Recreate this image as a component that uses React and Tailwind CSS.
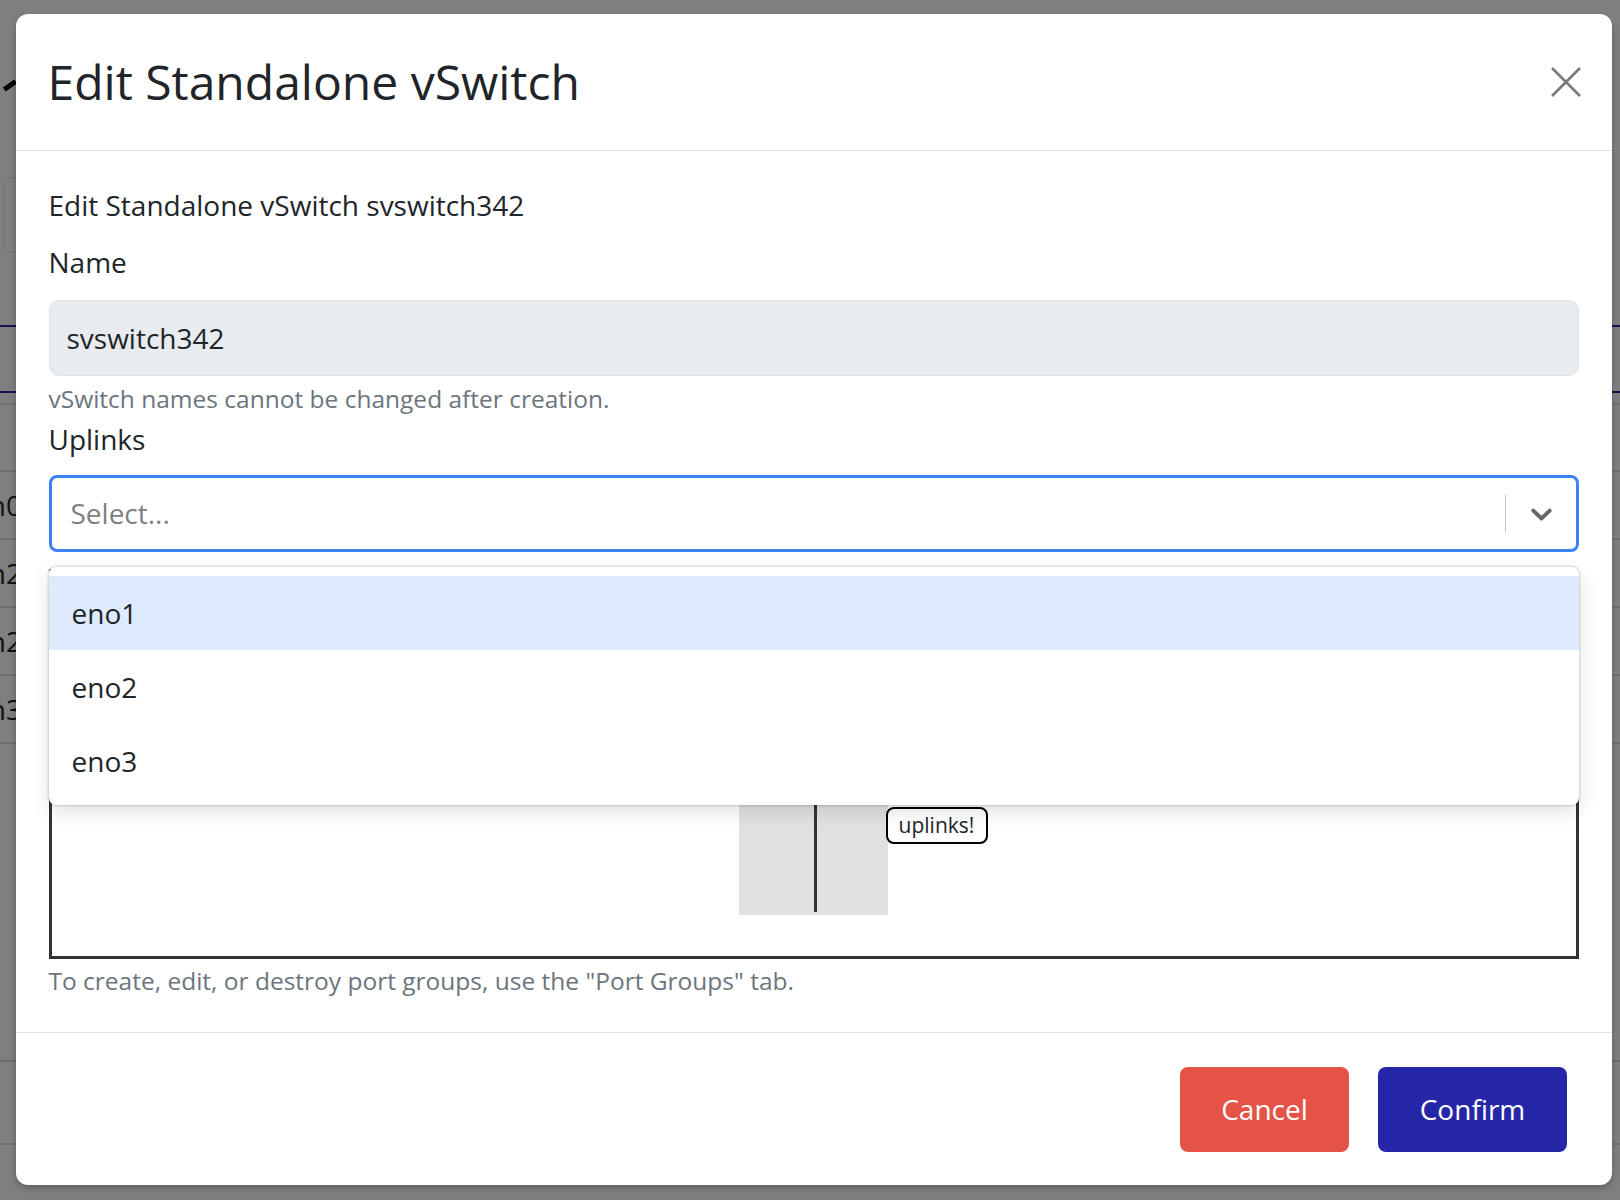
const bgRows = ["vlan0", "vlan2", "vlan2", "vlan3"];
const uplinks = ["eno1", "eno2", "eno3"];

function Chevron() {
  return (
    <svg viewBox="0 0 20 20" className="w-[35px] h-[35px] fill-[#666666]" aria-hidden="true">
      <path d="M4.516 7.548c0.436-0.446 1.043-0.481 1.576 0l3.908 3.747 3.908-3.747c0.533-0.481 1.141-0.446 1.574 0 0.436 0.445 0.408 1.197 0 1.615-0.406 0.418-4.695 4.502-4.695 4.502-0.217 0.223-0.502 0.335-0.787 0.335s-0.57-0.112-0.789-0.335c0 0-4.287-4.084-4.695-4.502s-0.436-1.17 0-1.615z" />
    </svg>
  );
}

function CloseIcon() {
  return (
    <svg viewBox="0 0 30 30" className="w-[30px] h-[30px]" aria-hidden="true">
      <path d="M1 1L29 29M29 1L1 29" stroke="#7a7a7a" strokeWidth="2.6" fill="none" />
    </svg>
  );
}

// page behind the modal, mostly hidden by it
function BackgroundPage() {
  return (
    <div className="flex flex-col w-full h-full bg-white text-[#212529]">
      <div className="h-[80px]" />
      <div className="h-[10px] flex items-center">
        <div className="ml-[3px] w-[14px] h-[5px] bg-black -rotate-[35deg]" />
      </div>
      <div className="h-[87px]" />
      <div className="h-[76px] ml-[3px] w-[400px] rounded-[8px] border border-[#dee2e6] bg-[#fdfdfd]" />
      <div className="h-[72px]" />
      <div className="h-[68px] border-y-2 border-[#2626a8]" />
      <div className="h-[12px] border-b-2 border-[#dee2e6]" />
      <div className="h-[67px] border-b-2 border-[#dee2e6]" />
      {bgRows.map((name, i) => (
        <div key={i} className="h-[68px] border-b-2 border-[#dee2e6] flex items-center">
          <div className="w-[22px] overflow-hidden flex justify-end">
            <span className="text-[28px] whitespace-nowrap">{name}</span>
          </div>
        </div>
      ))}
      <div className="h-[318px] border-b-2 border-[#d5d8dc]" />
      <div className="h-[83px] border-b-2 border-[#dee2e6]" />
      <div className="flex pl-[227px] pt-[6px] text-[28px] font-bold leading-[40px] text-black">
        <span className="w-[579px]">End Time</span>
        <span className="w-[692px]">Node</span>
        <span>Task</span>
      </div>
    </div>
  );
}

function UplinkSelect() {
  return (
    <div className="relative mt-[15px]">
      <div className="h-[77px] rounded-[8px] border-[3px] border-[#3d82f4] bg-white flex items-center">
        <div className="flex-1 pl-[19px] text-[28px] text-[#808080]">Select...</div>
        <div className="w-[1.5px] h-[39px] bg-[#cccccc]" />
        <div className="w-[70px] flex items-center justify-center">
          <Chevron />
        </div>
      </div>
      <div className="absolute left-0 right-0 top-[92px] z-10 rounded-[7px] bg-white pt-[9px] pb-[7px] shadow-[0_0_0_1.5px_rgba(0,0,0,0.1),0_7px_19px_rgba(0,0,0,0.12)]">
        {uplinks.map((u, i) => (
          <div
            key={u}
            className={`h-[74px] flex items-center px-[23px] text-[28px] text-[#212529] ${i === 0 ? "bg-[#deebff]" : ""}`}
          >
            {u}
          </div>
        ))}
      </div>
    </div>
  );
}

function SwitchDiagram() {
  return (
    <div className="relative mt-[11px] h-[352px] border-[3.5px] border-[#333333] bg-white">
      <div className="absolute left-[687px] top-[56px] w-[149px] h-[249px] bg-[#e1e1e1]" />
      <div className="absolute left-[762px] top-[56px] w-[3.5px] h-[246px] bg-[#333333]" />
      <div className="absolute left-[834px] top-[197px] w-[102px] h-[37px] rounded-[8px] border-2 border-black bg-white flex items-center justify-center text-[21px] text-[#212529]">
        uplinks!
      </div>
    </div>
  );
}

export default function App() {
  return (
    <div className="relative w-[1620px] h-[1200px] overflow-hidden font-['Open_Sans',sans-serif]">
      <BackgroundPage />
      <div className="absolute inset-0 bg-black/50" />

      <div className="absolute left-[15.5px] top-[13.5px] w-[1596.5px] h-[1171.5px] rounded-[12px] bg-white flex flex-col shadow-[0_3px_6px_rgba(0,0,0,0.25)] text-[#212529]">
        <div className="h-[137.5px] shrink-0 border-b-[1.5px] border-[#dee2e6] flex items-center justify-between pl-[32px] pr-[31px]">
          <h2 className="text-[48px] leading-[1.2] font-normal">Edit Standalone vSwitch</h2>
          <CloseIcon />
        </div>

        <div className="flex-1 min-h-0 px-[33px] pt-[33px] text-[28px] leading-[42px]">
          <p className="mb-[15px]">Edit Standalone vSwitch svswitch342</p>
          <div className="mb-[17px]">Name</div>
          <div className="h-[76px] rounded-[10px] border-[1.5px] border-[#dee2e6] bg-[#e9ecef] flex items-center pl-[17px]">
            svswitch342
          </div>
          <div className="mt-[5px] text-[24.5px] leading-[1.5] text-[#6c757d]">
            vSwitch names cannot be changed after creation.
          </div>
          <div>Uplinks</div>
          <UplinkSelect />
          <div className="mt-[7px] text-[24.5px] leading-[1.5] text-[#6c757d]">
            Which interfaces to connect to the vSwitch as uplinks.
          </div>
          <SwitchDiagram />
          <div className="mt-[4px] text-[24.5px] leading-[1.5] text-[#6c757d]">
            To create, edit, or destroy port groups, use the "Port Groups" tab.
          </div>
        </div>

        <div className="h-[153px] shrink-0 border-t-[1.5px] border-[#dee2e6] flex items-center justify-end gap-[29px] pr-[45px]">
          <button className="w-[169px] h-[85px] rounded-[8px] bg-[#e45345] text-white text-[28px]">Cancel</button>
          <button className="w-[189px] h-[85px] rounded-[8px] bg-[#2626a8] text-white text-[28px]">Confirm</button>
        </div>
      </div>
    </div>
  );
}
